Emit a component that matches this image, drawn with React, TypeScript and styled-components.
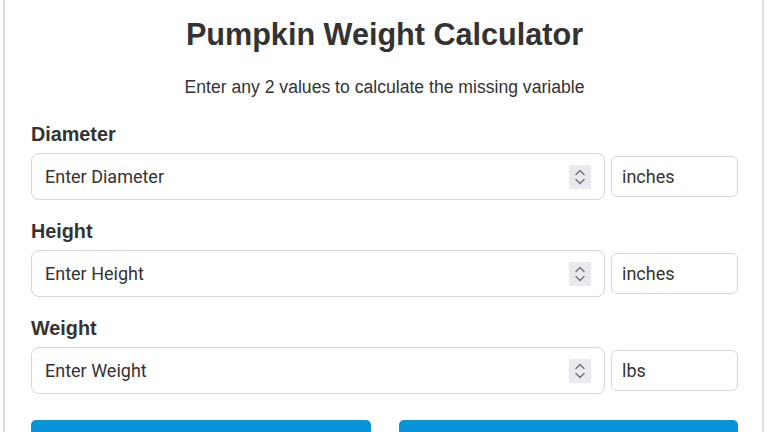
import React from "react";
import styled, { createGlobalStyle } from "styled-components";

const GlobalStyle = createGlobalStyle`
  html, body {
    margin: 0;
    padding: 0;
    background: #ffffff;
  }
  body {
    font-family: "Liberation Sans", Arial, sans-serif;
    color: #333333;
    overflow: hidden;
  }
`;

const Card = styled.div`
  margin: -20px 4px 0 3px;
  padding: 34px 24px 40px 26px;
  border: 2px solid #dddddd;
  border-radius: 8px;
  background: #ffffff;
`;

const Title = styled.h1`
  margin: 0;
  font-size: 30.6px;
  font-weight: bold;
  text-align: center;
  color: #333333;
  line-height: 36px;
`;

const Subtitle = styled.p`
  margin: 24px 0 0;
  font-size: 17.6px;
  text-align: center;
  color: #333333;
  line-height: 22px;
`;

const Group = styled.div`
  margin-top: 24px;
  & + & {
    margin-top: 19px;
  }
`;

const Label = styled.label`
  display: block;
  font-size: 19.8px;
  font-weight: bold;
  color: #333333;
  line-height: 24px;
  margin-bottom: 7px;
`;

const Row = styled.div`
  display: flex;
  align-items: center;
  gap: 6px;
`;

const InputWrap = styled.div`
  position: relative;
  flex: 1;
  display: flex;
`;

const NumberInput = styled.input`
  flex: 1;
  box-sizing: border-box;
  height: 47px;
  padding: 0 40px 0 13px;
  border: 1px solid #d6d6d6;
  border-radius: 8px;
  font-family: Roboto, sans-serif;
  font-size: 18px;
  color: #333333;
  background: #ffffff;
  outline: none;
  -moz-appearance: textfield;
  &::placeholder {
    color: #333333;
  }
  &::-webkit-inner-spin-button,
  &::-webkit-outer-spin-button {
    -webkit-appearance: none;
    margin: 0;
  }
`;

const Spinner = styled.span`
  position: absolute;
  right: 14px;
  top: 12px;
  width: 22px;
  height: 24px;
  background: #e9e9ee;
  display: flex;
  align-items: center;
  justify-content: center;
  pointer-events: none;
`;

const Unit = styled.select`
  box-sizing: border-box;
  width: 127px;
  height: 41px;
  padding: 0 10px;
  border: 1px solid #d6d6d6;
  border-radius: 6px;
  font-family: Roboto, sans-serif;
  font-size: 18px;
  color: #333333;
  background: #ffffff;
  appearance: none;
  outline: none;
`;

const Buttons = styled.div`
  display: grid;
  grid-template-columns: 1fr 1fr;
  gap: 28px;
  margin-top: 26px;
`;

const Button = styled.button`
  height: 52px;
  border: none;
  border-radius: 5px;
  background: #0a94d8;
  color: #ffffff;
  font-family: "Liberation Sans", Arial, sans-serif;
  font-size: 17.6px;
  font-weight: bold;
`;

type Field = { label: string; placeholder: string; unit: string };

const fields: Field[] = [
  { label: "Diameter", placeholder: "Enter Diameter", unit: "inches" },
  { label: "Height", placeholder: "Enter Height", unit: "inches" },
  { label: "Weight", placeholder: "Enter Weight", unit: "lbs" },
];

const SpinIcon = () => (
  <svg width="12" height="18" viewBox="0 0 12 18" fill="none">
    <path d="M2 6.5 L6 2.5 L10 6.5" stroke="#6f6f7a" strokeWidth="1.4" strokeLinecap="round" strokeLinejoin="round" />
    <path d="M2 11.5 L6 15.5 L10 11.5" stroke="#6f6f7a" strokeWidth="1.4" strokeLinecap="round" strokeLinejoin="round" />
  </svg>
);

export default function App() {
  return (
    <>
      <GlobalStyle />
      <Card>
        <Title>Pumpkin Weight Calculator</Title>
        <Subtitle>Enter any 2 values to calculate the missing variable</Subtitle>
        {fields.map((f) => (
          <Group key={f.label}>
            <Label>{f.label}</Label>
            <Row>
              <InputWrap>
                <NumberInput type="number" placeholder={f.placeholder} />
                <Spinner>
                  <SpinIcon />
                </Spinner>
              </InputWrap>
              <Unit defaultValue={f.unit}>
                <option value={f.unit}>{f.unit}</option>
              </Unit>
            </Row>
          </Group>
        ))}
        <Buttons>
          <Button>Calculate</Button>
          <Button>Clear</Button>
        </Buttons>
      </Card>
    </>
  );
}
